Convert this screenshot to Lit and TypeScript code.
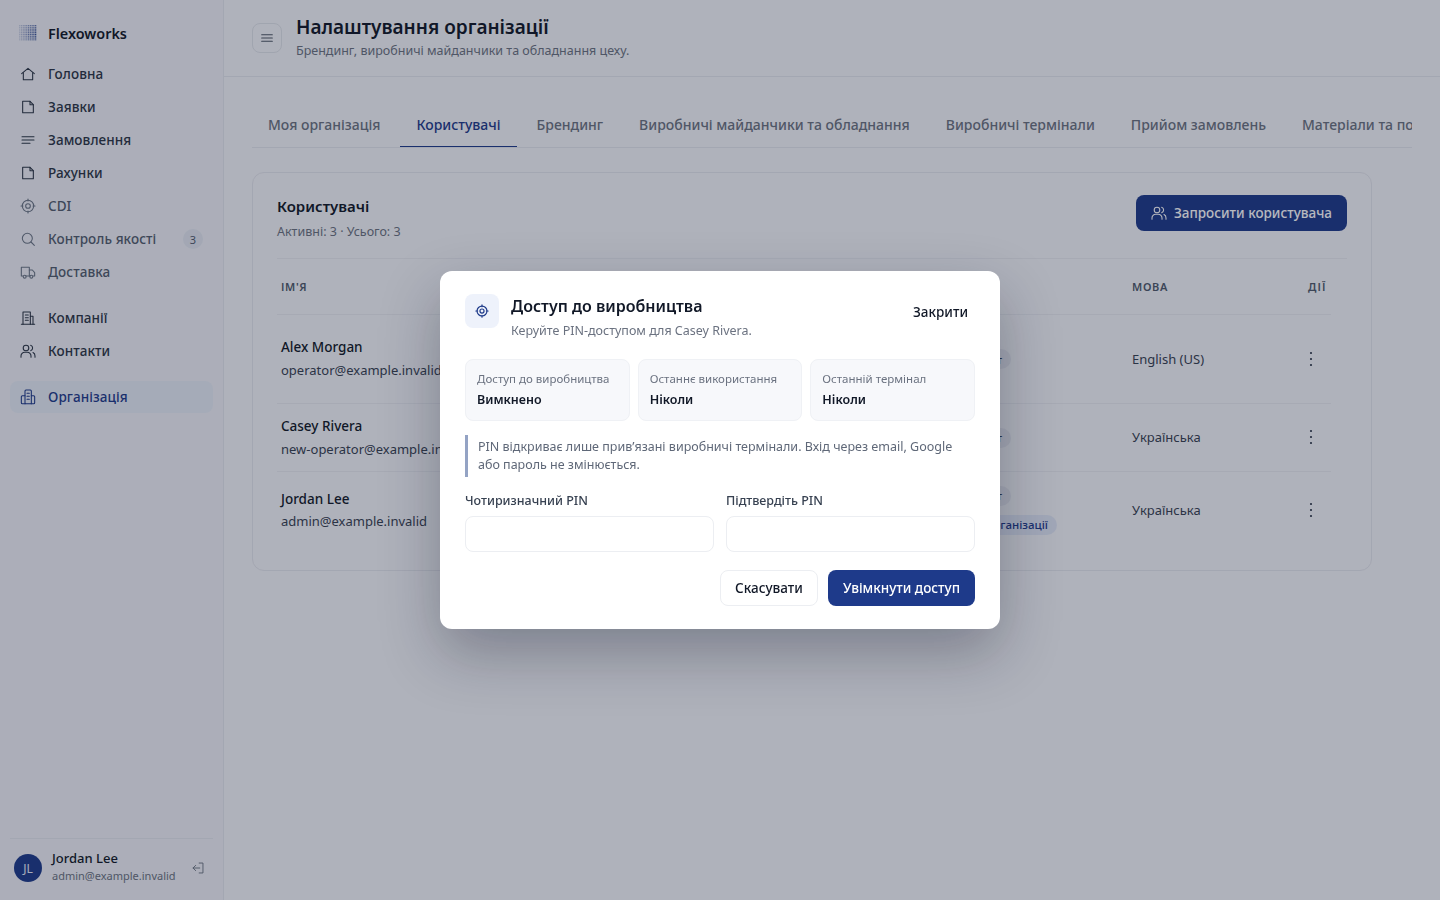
import { LitElement, html, css, svg } from "lit";
import { customElement } from "lit/decorators.js";

const ic = (p: any, cls = "ic") => html`<svg class=${cls} viewBox="0 0 24 24" fill="none" stroke="currentColor" stroke-width="1.6" stroke-linecap="round" stroke-linejoin="round">${p}</svg>`;
const I: Record<string, any> = {
  home: svg`<path d="M2.500 11.500 12 3.500l9.500 8"/><path d="M5 10v10.500h14V10"/>`,
  doc: svg`<path d="M4 3.500h11l5 5v12H4z"/><path d="M15 3.500v5h5"/>`,
  lines: svg`<path d="M3 7h18M3 12h18M3 17h12"/>`,
  target: svg`<circle cx="12" cy="12" r="8.500"/><circle cx="12" cy="12" r="3.500"/><path d="M12 1.500v3M12 19.500v3M1.500 12h3M19.500 12h3"/>`,
  search: svg`<circle cx="11" cy="11" r="7.500"/><path d="m16.500 16.500 5 5"/>`,
  truck: svg`<path d="M14 18V5H2v13h2"/><path d="M14 9h4.500l3.500 4v5h-2"/><path d="M9 18h6"/><circle cx="7" cy="19" r="2.200"/><circle cx="17" cy="19" r="2.200"/>`,
  company: svg`<path d="M2 21.500h20"/><path d="M4.500 21.500V3h11v18.500"/><path d="M15.500 9.500h4v12"/><path d="M8 7.500h4.500M8 11.500h4.500M8 15.500h4.500"/>`,
  users: svg`<circle cx="9" cy="7.500" r="4.200"/><path d="M1.500 21.500v-2a5.500 5.500 0 0 1 5.500-5.500h4a5.500 5.500 0 0 1 5.500 5.500v2"/><path d="M16 3.500a4.200 4.200 0 0 1 0 8"/><path d="M19.500 14.300a5.500 5.500 0 0 1 3 5.200v2"/>`,
  org: svg`<path d="M7.500 22V3a1.500 1.500 0 0 1 1.500-1.500h6.500a1.500 1.500 0 0 1 1.500 1.500v19z"/><path d="M7.500 10H3.500a1.500 1.500 0 0 0-1.500 1.500v9A1.500 1.500 0 0 0 3.500 22h4"/><path d="M17 10h3.500a1.500 1.500 0 0 1 1.500 1.500v9a1.500 1.500 0 0 1-1.500 1.500H17"/><path d="M10.500 6.500h3.500M10.500 11h3.500M10.500 15.500h3.500"/>`,
  logout: svg`<path d="M14 3.500h6.500v17H14"/><path d="M15 12H3.500"/><path d="m8 7.500-4.500 4.500 4.500 4.500"/>`,
  menu: svg`<path d="M4 7h16M4 12h16M4 17h16"/>`,
  dots: svg`<circle cx="12" cy="3" r=".85" fill="currentColor"/><circle cx="12" cy="12" r=".85" fill="currentColor"/><circle cx="12" cy="21" r=".85" fill="currentColor"/>`,
};

const nav1 = [
  ["home", "Головна", ""], ["doc", "Заявки", ""], ["lines", "Замовлення", ""], ["doc", "Рахунки", ""],
  ["target", "CDI", "muted"], ["search", "Контроль якості", "muted"], ["truck", "Доставка", "muted"],
];
const tabs = ["Моя організація", "Користувачі", "Брендинг", "Виробничі майданчики та обладнання", "Виробничі термінали", "Прийом замовлень", "Матеріали та послуги"];
const rows = [
  { n: "Alex Morgan", e: "operator@example.invalid", l: "English (US)", p: ["Активний акаунт"], c: "r1" },
  { n: "Casey Rivera", e: "new-operator@example.invalid", l: "Українська", p: ["Активний акаунт"], c: "r2" },
  { n: "Jordan Lee", e: "admin@example.invalid", l: "Українська", p: ["Активний акаунт", "Адміністратор організації"], c: "r3" },
];
const stats = [["Доступ до виробництва", "Вимкнено"], ["Останнє використання", "Ніколи"], ["Останній термінал", "Ніколи"]];

@customElement("app-root")
export class AppRoot extends LitElement {
  static styles = css`
    :host { display: block; height: 900px; font-family: "Noto Sans", sans-serif; color: #111827; font-size: 13px; }
    * { box-sizing: border-box; }
    .ic { width: 16px; height: 16px; flex: none; display: block; }
    .page { display: flex; height: 900px; background: #f4f5f9; overflow: hidden; }
    .side { width: 224px; flex: none; background: #eff0f6; border-right: 1px solid #e3e5ec; display: flex; flex-direction: column; padding: 0 10px 18px; }
    .brand { display: flex; align-items: center; gap: 11px; height: 58px; padding: 8px 0 0 9px; font-size: 14.400px; font-weight: 600; color: #111827; }
    .logo { width: 18px; height: 16px; flex: none; display: block; }
    .group { display: flex; flex-direction: column; gap: 1px; }
    .group + .group { margin-top: 14px; }
    .item { height: 32px; display: flex; align-items: center; gap: 12px; padding-left: 10px; padding-right: 10px; border-radius: 8px; font-size: 13.500px; letter-spacing: .07px; font-weight: 500; color: #2b3444; }
    .item.muted { color: #525c6d; }
    .item.muted .ic { color: #6b7585; }
    .item.active { background: #e6ebf5; color: #1e3a8a; }
    .item .name { flex: 1; }
    .count { width: 20px; height: 20px; border-radius: 50%; background: #e2e6f0; color: #525c6d; font-size: 11px; display: flex; align-items: center; justify-content: center; font-weight: 400; }
    .foot { margin-top: auto; border-top: 1px solid #e3e5ec; padding: 15px 8px 0 4px; display: flex; align-items: center; gap: 10px; height: 44px; }
    .avatar { width: 28px; height: 28px; border-radius: 50%; background: #1e3a8a; color: #e8edf8; display: flex; align-items: center; justify-content: center; font-size: 12px; flex: none; }
    .who { flex: 1; min-width: 0; margin-bottom: 2px; }
    .who b { display: block; font-size: 13px; font-weight: 500; line-height: 18px; color: #111827; }
    .who span { display: block; font-size: 11px; line-height: 18px; color: #6b7280; }
    .foot .ic { width: 14px; height: 14px; color: #6b7280; }
    .main { flex: 1; min-width: 0; display: flex; flex-direction: column; }
    .top { height: 77px; flex: none; border-bottom: 1px solid #e3e5ec; display: flex; align-items: center; gap: 14px; padding: 0 28px; }
    .menu { width: 30px; height: 30px; border: 1px solid #dfe2e9; border-radius: 8px; display: flex; align-items: center; justify-content: center; color: #4b5563; }
    .top h1 { margin: -2px 0 1px; font-size: 19px; line-height: 26px; font-weight: 600; color: #111827; }
    .top p { margin: 0; font-size: 12.500px; line-height: 20px; color: #6b7280; }
    .content { padding: 28px 28px 0; }
    .tabs { display: flex; gap: 4px; border-bottom: 1px solid #e3e5ec; overflow: hidden; white-space: nowrap; height: 43px; }
    .tab { padding: 0 16px 3px; height: 42px; display: flex; align-items: center; font-size: 14px; font-weight: 500; color: #6b7280; flex: none; border-bottom: 1.500px solid transparent; }
    .tab.on { color: #1e3a8a; border-bottom-color: #1e3a8a; }
    .card { margin-top: 24px; width: 1120px; height: 399px; border: 1px solid #e3e5ec; border-radius: 12px; padding: 0 24px; }
    .chead { height: 86px; border-bottom: 1px solid #e8eaf0; display: flex; justify-content: space-between; padding-top: 21px; }
    .chead h2 { margin: 0; font-size: 15px; line-height: 24px; font-weight: 600; color: #111827; }
    .chead p { margin: 4px 0 0; font-size: 12.500px; line-height: 20px; color: #6b7280; }
    .chead .btn { margin-top: 1px; }
    .btn { height: 36px; border-radius: 8px; border: 1px solid transparent; display: inline-flex; align-items: center; justify-content: center; gap: 7px; font: 500 13.500px "Noto Sans", sans-serif; padding: 0 14px; }
    .btn.primary { background: #1e3a8a; color: #fff; }
    .btn.ghost { background: #fff; border-color: #eceef2; color: #111827; }
    .table { width: 1054px; }
    .tr { display: grid; grid-template-columns: 616px 235px 176px 27px; align-items: center; border-bottom: 1px solid #e8eaf0; }
    .tr:last-child { border-bottom: none; }
    .tr > div { padding-left: 4px; min-width: 0; }
    .tr > .pills { padding-left: 0; }
    .th { height: 56px; font-size: 11px; font-weight: 600; letter-spacing: .06em; color: #4f5a6b; }
    .th .wide { letter-spacing: .1em; }
    .r1 { height: 89px; } .r2 { height: 68px; } .r3 { height: 76px; }
    .nm { font-size: 13.500px; font-weight: 500; line-height: 20px; color: #111827; margin-top: -1px; }
    .em { font-size: 13px; line-height: 20px; color: #374151; margin-top: 3px; }
    .r2 .nm { margin-top: 0; }
    .r3 .em { margin-top: 2px; }
    .lang { font-size: 13px; color: #374151; }
    .r2 .lang { margin-top: -1px; }
    .pills { display: flex; flex-direction: column; align-items: flex-start; gap: 9px; }
    .pill { height: 20px; border-radius: 10px; background: #e5e7ee; padding: 0 9px; display: flex; align-items: center; justify-content: flex-end; font-size: 11.500px; font-weight: 500; color: #334155; white-space: nowrap; }
    .pill.first { width: 118px; }
    .pill.org { background: #e0e6f5; color: #1e3a8a; }
    .act { color: #374151; }
    .act .ic { margin-left: -5px; }
    .r2 .act { margin-top: -1px; }
    .veil { position: fixed; inset: 0; background: rgba(15, 23, 42, .3); display: flex; align-items: center; justify-content: center; }
    .modal { width: 560px; height: 358px; background: #fff; border-radius: 12px; padding: 23px 25px 0; box-shadow: 0 24px 60px rgba(15, 23, 42, .32); }
    .mhead { display: flex; gap: 12px; align-items: flex-start; height: 65px; }
    .mic { width: 34px; height: 34px; border-radius: 8px; background: #eef2fb; color: #1e3a8a; display: flex; align-items: center; justify-content: center; flex: none; }
    .mic svg { width: 14px; height: 14px; stroke-width: 2; }
    .mtt { flex: 1; }
    .mtt h3 { margin: 0; font-size: 16px; line-height: 24px; font-weight: 600; color: #111827; }
    .mtt p { margin: 3px 0 0; font-size: 12.500px; line-height: 20px; color: #6b7280; }
    .close { font-size: 13.500px; font-weight: 500; color: #111827; padding: 8px 7px 0 0; line-height: 20px; }
    .stats { display: grid; grid-template-columns: repeat(3, 1fr); gap: 8px; }
    .stat { height: 62px; border-radius: 8px; background: #f7f8fb; border: 1px solid #eff1f5; padding: 11px 11px 0; }
    .stat span { display: block; font-size: 11.500px; line-height: 16px; color: #6b7280; }
    .stat b { display: block; font-size: 12.500px; line-height: 20px; font-weight: 600; color: #111827; margin-top: 3px; }
    .note { margin-top: 14px; border-left: 3px solid #94a3c4; padding: 3px 0 3px 10px; font-size: 12.500px; line-height: 18px; color: #5f6878; }
    .fields { margin-top: 15px; display: grid; grid-template-columns: 1fr 1fr; gap: 12px; }
    .fields label { display: block; font-size: 12.500px; line-height: 18px; font-weight: 500; color: #374151; }
    .inp { margin-top: 6px; height: 36px; border: 1px solid #eceef2; border-radius: 8px; background: #fff; }
    .macts { margin-top: 18px; display: flex; justify-content: flex-end; gap: 10px; }
  `;

  render() {
    const logo = [];
    for (let y = 0; y < 9; y++) for (let x = 0; x < 10; x++) {
      const o = 0.2 + 0.085 * x * (y > 1 && y < 8 ? 1 : 0.7);
      logo.push(svg`<rect x=${x * 2} y=${y * 2} width="1.300" height="1.300" fill="#1e3a8a" opacity=${o}/>`);
    }
    return html`<div class="page">
      <aside class="side">
        <div class="brand"><svg class="logo" viewBox="0 0 20 18">${logo}</svg>Flexoworks</div>
        <div class="group">${nav1.map(([i, t, m]) => html`<div class="item ${m}">${ic(I[i])}<span class="name">${t}</span>${t === "Контроль якості" ? html`<span class="count">3</span>` : ""}</div>`)}</div>
        <div class="group">
          <div class="item">${ic(I.company)}<span class="name">Компанії</span></div>
          <div class="item">${ic(I.users)}<span class="name">Контакти</span></div>
        </div>
        <div class="group"><div class="item active">${ic(I.org)}<span class="name">Організація</span></div></div>
        <div class="foot"><div class="avatar">JL</div><div class="who"><b>Jordan Lee</b><span>admin@example.invalid</span></div>${ic(I.logout)}</div>
      </aside>
      <main class="main">
        <header class="top">
          <div class="menu">${ic(I.menu)}</div>
          <div><h1>Налаштування організації</h1><p>Брендинг, виробничі майданчики та обладнання цеху.</p></div>
        </header>
        <div class="content">
          <div class="tabs">${tabs.map((t, i) => html`<div class="tab ${i === 1 ? "on" : ""}">${t}</div>`)}</div>
          <section class="card">
            <div class="chead">
              <div><h2>Користувачі</h2><p>Активні: 3 · Усього: 3</p></div>
              <div class="btn primary">${ic(I.users)}Запросити користувача</div>
            </div>
            <div class="table">
              <div class="tr th"><div>ІМ'Я</div><div>РОЛЬ</div><div>МОВА</div><div class="wide">ДІЇ</div></div>
              ${rows.map((r) => html`<div class="tr ${r.c}">
                <div><div class="nm">${r.n}</div><div class="em">${r.e}</div></div>
                <div class="pills">${r.p.map((p, i) => html`<span class="pill ${i ? "org" : "first"}">${p}</span>`)}</div>
                <div class="lang">${r.l}</div>
                <div class="act">${ic(I.dots)}</div>
              </div>`)}
            </div>
          </section>
        </div>
      </main>
      <div class="veil">
        <div class="modal">
          <div class="mhead">
            <div class="mic">${ic(I.target)}</div>
            <div class="mtt"><h3>Доступ до виробництва</h3><p>Керуйте PIN-доступом для Casey Rivera.</p></div>
            <div class="close">Закрити</div>
          </div>
          <div class="stats">${stats.map(([a, b]) => html`<div class="stat"><span>${a}</span><b>${b}</b></div>`)}</div>
          <div class="note">PIN відкриває лише прив’язані виробничі термінали. Вхід через email, Google або пароль не змінюється.</div>
          <div class="fields">
            <div><label>Чотиризначний PIN</label><div class="inp"></div></div>
            <div><label>Підтвердіть PIN</label><div class="inp"></div></div>
          </div>
          <div class="macts"><div class="btn ghost">Скасувати</div><div class="btn primary">Увімкнути доступ</div></div>
        </div>
      </div>
    </div>`;
  }
}
